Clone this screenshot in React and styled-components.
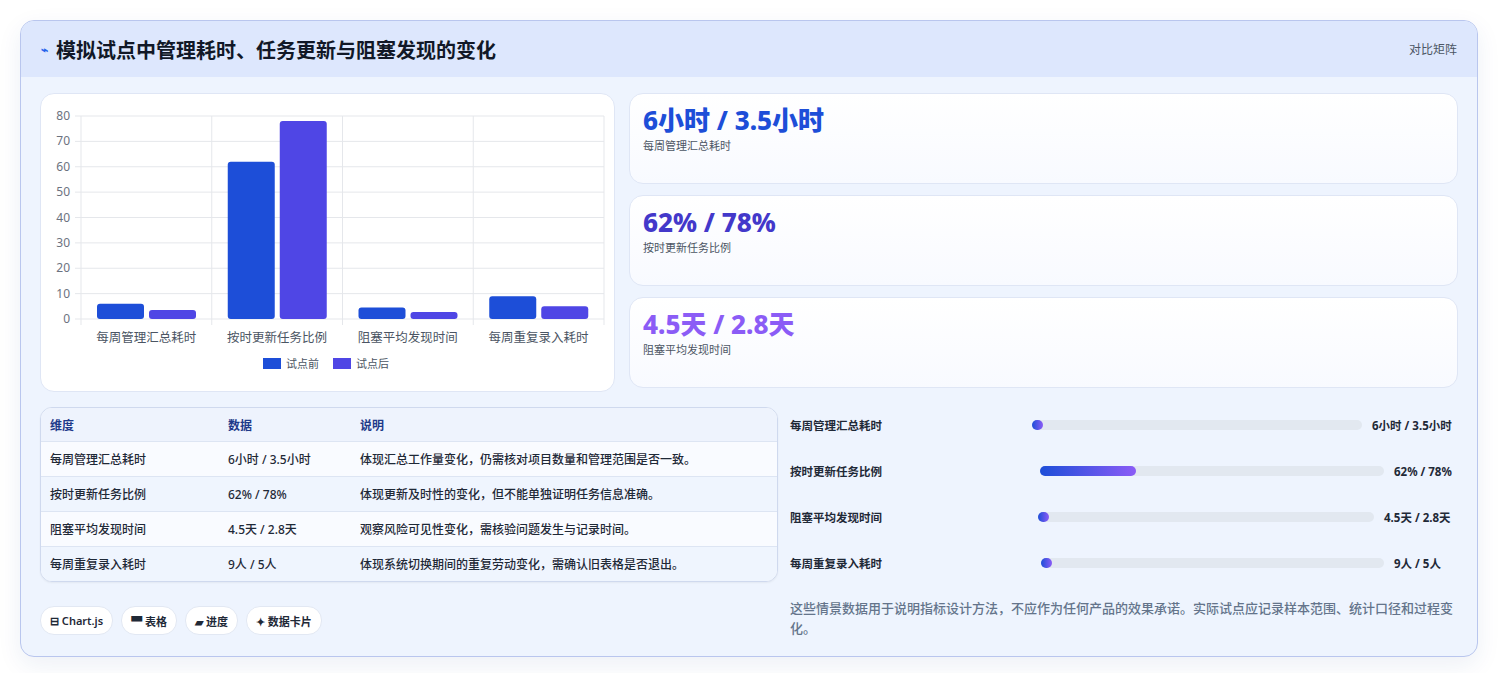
import React from 'react';
import styled, { createGlobalStyle } from 'styled-components';

const Global = createGlobalStyle`
  body { margin: 0; background: #fff; font-family: "Noto Sans", "Noto Sans CJK SC", sans-serif; }
`;

const Page = styled.div`
  padding: 20px;
`;

const Card = styled.div`
  border: 1px solid #b9c6ee;
  border-radius: 14px;
  background: #eef4fe;
  box-shadow: 0 8px 24px rgba(30, 58, 138, 0.08);
  overflow: hidden;
`;

const Header = styled.div`
  height: 56px;
  background: #dde7fd;
  display: flex;
  align-items: center;
  justify-content: space-between;
  padding: 0 20px;
  h1 {
    margin: 0;
    font-size: 20px;
    font-weight: 700;
    color: #111827;
    display: flex;
    align-items: center;
    gap: 8px;
  }
  span { font-size: 12px; color: #4b5563; }
`;

const Body = styled.div`
  padding: 16px 19px 18px 19px;
  display: grid;
  grid-template-columns: 575px 1fr;
  column-gap: 14px;
`;

const Panel = styled.div`
  background: #fff;
  border: 1px solid #dfe6f5;
  border-radius: 14px;
`;

const ChartPanel = styled(Panel)`
  height: 297px;
`;

const Stats = styled.div`
  display: flex;
  flex-direction: column;
  gap: 11px;
`;

const Stat = styled(Panel)`
  height: 91px;
  padding: 9px 13px;
  box-sizing: border-box;
  background: linear-gradient(180deg, #ffffff, #f8faff);
`;

const StatValue = styled.div`
  font-size: 26px;
  font-weight: 800;
  color: ${p => p.color};
  line-height: 34px;
`;

const StatLabel = styled.div`
  font-size: 11px;
  color: #4b5563;
`;

const Bottom = styled.div`
  grid-column: 1 / -1;
  display: grid;
  grid-template-columns: 738px 1fr;
  column-gap: 12px;
  margin-top: 15px;
`;

const Table = styled.div`
  border: 1px solid #cfd9ee;
  border-radius: 12px;
  overflow: hidden;
  background: #fff;
  box-shadow: 0 1px 2px rgba(0,0,0,0.05);
`;

const Row = styled.div`
  display: grid;
  grid-template-columns: 178px 132px 1fr;
  height: ${p => (p.head ? 33 : 34)}px;
  align-items: center;
  padding-left: 9px;
  font-size: 12px;
  color: ${p => (p.head ? '#1e3a8a' : '#1f2937')};
  font-weight: ${p => (p.head ? 600 : 500)};
  background: ${p => (p.head ? '#eef3fd' : p.alt ? '#eff5fe' : '#f9fbff')};
  border-top: ${p => (p.head ? 'none' : '1px solid #dde5f3')};
`;

const Tags = styled.div`
  display: flex;
  gap: 8px;
  margin-top: 24px;
`;

const Tag = styled.div`
  height: 27px;
  padding: 0 9px;
  border-radius: 14px;
  background: #fff;
  border: 1px solid #e2e8f3;
  display: flex;
  align-items: center;
  font-size: 11px;
  font-weight: 600;
  color: #1f2937;
`;

const PRow = styled.div`
  display: flex;
  align-items: center;
  height: 46px;
  margin-top: ${p => (p.first ? -5 : 0)}px;
  font-size: 11.5px;
  font-weight: 600;
  color: #1f2937;
`;

const PLabel = styled.div`
  width: ${p => p.w}px;
`;

const Track = styled.div`
  flex: 1;
  height: 10px;
  border-radius: 5px;
  background: #e2e8f0;
  margin-right: 10px;
`;

const Fill = styled.div`
  height: 100%;
  border-radius: 5px;
  min-width: 11px;
  background: linear-gradient(90deg, #1d4ed8, #8b5cf6);
`;

const PValue = styled.div`
  font-weight: 700;
  font-size: 11.5px;
  white-space: nowrap;
  width: ${p => p.w}px;
`;

const Note = styled.p`
  margin: 12px 0 0;
  font-size: 13px;
  line-height: 20px;
  color: #64748b;
  font-weight: 500;
`;

const cats = ['每周管理汇总耗时', '按时更新任务比例', '阻塞平均发现时间', '每周重复录入耗时'];
const before = [6, 62, 4.5, 9];
const after = [3.5, 78, 2.8, 5];

const Chart = () => {
  const x0 = 40, x1 = 563, y0 = 225, yTop = 22;
  const sc = (y0 - yTop) / 80;
  const cw = (x1 - x0) / 4;
  return (
    <svg width="575" height="297" style={{ display: 'block' }}>
      {[0, 10, 20, 30, 40, 50, 60, 70, 80].map(v => (
        <g key={v}>
          <line x1={x0 - 6} x2={x1} y1={y0 - v * sc} y2={y0 - v * sc} stroke="#e5e7eb" />
          <text x={x0 - 11} y={y0 - v * sc + 4} fontSize="12" fill="#6b7280" textAnchor="end">{v}</text>
        </g>
      ))}
      {[0, 1, 2, 3, 4].map(i => (
        <line key={i} x1={x0 + i * cw} x2={x0 + i * cw} y1={yTop} y2={y0 + 6} stroke="#e5e7eb" />
      ))}
      {cats.map((c, i) => (
        <g key={c}>
          <rect x={x0 + i * cw + 16} y={y0 - before[i] * sc} width="47" height={before[i] * sc} rx="3" fill="#1d4ed8" />
          <rect x={x0 + i * cw + 68} y={y0 - after[i] * sc} width="47" height={after[i] * sc} rx="3" fill="#4f46e5" />
          <text x={x0 + i * cw + cw / 2} y={y0 + 23} fontSize="12.5" fill="#4b5563" textAnchor="middle">{c}</text>
        </g>
      ))}
      <rect x="222" y="264" width="18" height="11" fill="#1d4ed8" />
      <text x="245" y="274" fontSize="11" fill="#4b5563">试点前</text>
      <rect x="292" y="264" width="18" height="11" fill="#4f46e5" />
      <text x="315" y="274" fontSize="11" fill="#4b5563">试点后</text>
    </svg>
  );
};

const stats = [
  ['6小时 / 3.5小时', '每周管理汇总耗时', '#1d4ed8'],
  ['62% / 78%', '按时更新任务比例', '#4338ca'],
  ['4.5天 / 2.8天', '阻塞平均发现时间', '#8b5cf6'],
];

const rows = [
  ['每周管理汇总耗时', '6小时 / 3.5小时', '体现汇总工作量变化，仍需核对项目数量和管理范围是否一致。'],
  ['按时更新任务比例', '62% / 78%', '体现更新及时性的变化，但不能单独证明任务信息准确。'],
  ['阻塞平均发现时间', '4.5天 / 2.8天', '观察风险可见性变化，需核验问题发生与记录时间。'],
  ['每周重复录入耗时', '9人 / 5人', '体现系统切换期间的重复劳动变化，需确认旧表格是否退出。'],
];

const progress = [
  ['每周管理汇总耗时', '6小时 / 3.5小时', 242, 86, 3],
  ['按时更新任务比例', '62% / 78%', 250, 64, 28],
  ['阻塞平均发现时间', '4.5天 / 2.8天', 248, 74, 3],
  ['每周重复录入耗时', '9人 / 5人', 251, 64, 3],
];

export default function App() {
  return (
    <Page>
      <Global />
      <Card>
        <Header>
          <h1><span style={{ color: '#2563eb', fontSize: 12 }}>⌁</span>模拟试点中管理耗时、任务更新与阻塞发现的变化</h1>
          <span>对比矩阵</span>
        </Header>
        <Body>
          <ChartPanel><Chart /></ChartPanel>
          <Stats>
            {stats.map(([v, l, c]) => (
              <Stat key={l}>
                <StatValue color={c}>{v}</StatValue>
                <StatLabel>{l}</StatLabel>
              </Stat>
            ))}
          </Stats>
          <Bottom>
            <div>
              <Table>
                <Row head><span>维度</span><span>数据</span><span>说明</span></Row>
                {rows.map((r, i) => (
                  <Row key={r[0]} alt={i % 2 === 1}>
                    {r.map(c => <span key={c}>{c}</span>)}
                  </Row>
                ))}
              </Table>
              <Tags>
                <Tag>⊟ Chart.js</Tag>
                <Tag>▀ 表格</Tag>
                <Tag>▰ 进度</Tag>
                <Tag>✦ 数据卡片</Tag>
              </Tags>
            </div>
            <div>
              {progress.map(([l, v, w, vw, pct], i) => (
                <PRow key={l} first={i === 0}>
                  <PLabel w={w}>{l}</PLabel>
                  <Track><Fill style={{ width: `${pct}%` }} /></Track>
                  <PValue w={vw}>{v}</PValue>
                </PRow>
              ))}
              <Note>这些情景数据用于说明指标设计方法，不应作为任何产品的效果承诺。实际试点应记录样本范围、统计口径和过程变化。</Note>
            </div>
          </Bottom>
        </Body>
      </Card>
    </Page>
  );
}
